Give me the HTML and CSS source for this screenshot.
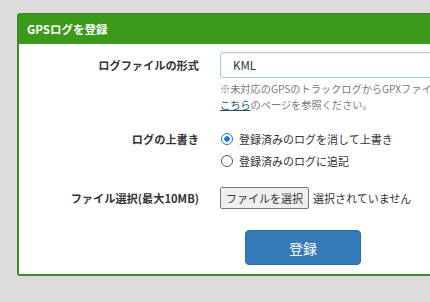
FILE: index.html
```html
<!DOCTYPE html>
<html lang="ja">
<head>
    <meta charset="UTF-8">
    <title>GPSログを登録</title>
    <link rel="stylesheet" href="styles.css">
</head>
<body>
    <div class="panel">
        <div class="panel-heading">GPSログを登録</div>
        <form class="panel-body">
            <!-- ログ形式 -->
            <div class="row row-format">
                <label class="label">ログファイルの形式</label>
                <div class="control">
                    <div class="select">KML</div>
                    <p class="help">※未対応のGPSのトラックログからGPXファイルを作成する場合は<br><a href="#">こちら</a>のページを参照ください。</p>
                </div>
            </div>

            <!-- 上書き -->
            <div class="row row-mode">
                <label class="label">ログの上書き</label>
                <div class="control radios">
                    <label class="radio"><span class="dot checked"></span>登録済みのログを消して上書き</label>
                    <label class="radio"><span class="dot"></span>登録済みのログに追記</label>
                </div>
            </div>

            <!-- ファイル -->
            <div class="row row-file">
                <label class="label">ファイル選択(最大10MB)</label>
                <div class="control file">
                    <span class="file-btn">ファイルを選択</span>
                    <span class="file-name">選択されていません</span>
                </div>
            </div>

            <div class="actions">
                <button type="button" class="submit">登録</button>
            </div>
        </form>
    </div>
</body>
</html>
```

FILE: styles.css
```css
* {
    margin: 0;
    padding: 0;
    box-sizing: border-box;
}
body {
    font-family: "Noto Sans CJK JP", "Noto Sans", sans-serif;
    font-size: 11px;
    color: #333;
    background: #dcdcdc;
    overflow: hidden;
    padding: 13px 0 0 17px;
}

/* Panel */
.panel {
    width: 520px;
    background: #fff;
    border: 2px solid #3e8e26;
    border-radius: 3px;
}
.panel-heading {
    height: 29px;
    line-height: 29px;
    padding-left: 8px;
    background: #3c9a1a;
    color: #fff;
    font-weight: bold;
    font-size: 11.5px;
}
.panel-body {
    padding: 8px 0 9px;
}

/* Rows */
.row {
    display: grid;
    grid-template-columns: 180px 1fr;
    column-gap: 21px;
}
.label {
    text-align: right;
    font-weight: bold;
    font-size: 11.2px;
}
.row-format .label {
    line-height: 26px;
}
.select {
    height: 26px;
    line-height: 24px;
    padding-left: 12px;
    border: 1px solid #a9c7e3;
    border-radius: 3px;
    box-shadow: inset 0 1px 1px rgba(0, 0, 0, 0.06);
    font-size: 11.5px;
}
.help {
    margin-top: 3px;
    font-size: 10.2px;
    line-height: 16px;
    color: #7a7a7a;
    white-space: nowrap;
}
.help a {
    color: #23527c;
}

.row-mode {
    margin-top: 15px;
}
.row-mode .label {
    line-height: 22px;
}
.radios {
    display: flex;
    flex-direction: column;
}
.radio {
    display: flex;
    align-items: center;
    gap: 6px;
    height: 22px;
}
.dot {
    width: 12px;
    height: 12px;
    border: 1px solid #555;
    border-radius: 50%;
    margin-left: 1px;
}
.dot.checked {
    border-color: #1a73e8;
    background: radial-gradient(circle, #1a73e8 0 2.5px, #fff 3px);
}

.row-file {
    margin-top: 15px;
}
.row-file .label {
    line-height: 22px;
}
.file {
    display: flex;
    align-items: center;
    gap: 4px;
}
.file-btn {
    height: 22px;
    line-height: 20px;
    padding: 0 5px;
    border: 1px solid #767676;
    border-radius: 2px;
    background: #efefef;
}

/* Submit */
.actions {
    margin: 21px 0 0 226px;
}
.submit {
    width: 116px;
    height: 35px;
    border: 1px solid #2e6da4;
    border-radius: 4px;
    background: #337ab7;
    color: #fff;
    font-family: inherit;
    font-size: 14px;
}
```
